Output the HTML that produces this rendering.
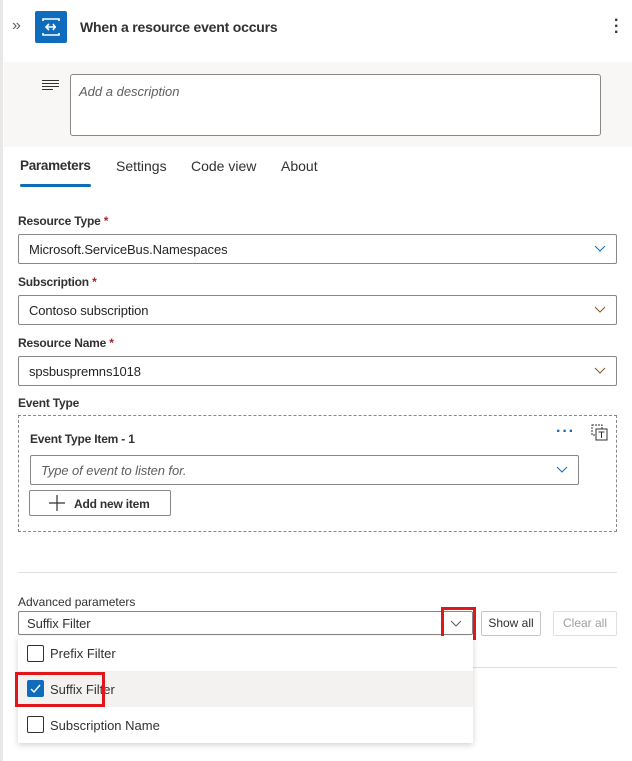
<!DOCTYPE html>
<html><head><meta charset="utf-8"><style>
*{box-sizing:border-box;margin:0;padding:0}
body{width:632px;height:761px;background:#fff;font-family:"Liberation Sans",sans-serif;color:#242424;position:relative;overflow:hidden;font-size:13px}
.a{position:absolute}
.lbl{font-size:12px;font-weight:bold;color:#323130;letter-spacing:-0.2px}
.lbl span{color:#a4262c}
.inp{border:1px solid #8a8886;border-radius:2px;background:#fff;font-size:13px;padding-left:10px;display:flex;align-items:center;letter-spacing:-0.1px}
.chev{position:absolute;right:10px;top:50%;margin-top:-4px}
.cb{width:17px;height:17px;border:1px solid #323130;border-radius:2px;position:absolute;left:9px}
</style></head><body>
<div class="a" style="left:0;top:0;width:3px;height:761px;background:#e8e8e8"></div>
<div class="a" style="left:12px;top:17px;color:#605e5c;font-size:16px">»</div>
<div class="a" style="left:35px;top:11px;width:32px;height:32px;background:#0f6cbd;border-radius:2px">
<svg width="32" height="32" viewBox="0 0 32 32"><g stroke="#fff" stroke-width="1.6" fill="none"><path d="M8 10V8h16v2M8 22v2h16v-2"/><path d="M11 16h10M14 13l-3 3 3 3M18 13l2 3-2 3"/></g></svg></div>
<div class="a" style="left:80px;top:19px;font-size:14px;font-weight:bold;color:#323130;letter-spacing:-0.2px">When a resource event occurs</div>
<div class="a" style="left:614px;top:18px;font-size:16px;font-weight:bold;line-height:6px;color:#323130">·<br>·<br>·</div>
<div class="a" style="left:4px;top:62px;width:628px;height:85px;background:#f8f7f6"></div>
<svg class="a" style="left:42px;top:80px" width="18" height="10"><g stroke="#323130" stroke-width="1"><path d="M0 .5h17M0 3.5h17M0 6.5h17M0 9.5h11"/></g></svg>
<div class="a" style="left:70px;top:74px;width:531px;height:62px;border:1px solid #8a8886;border-radius:3px;background:#fff;padding:9px 8px;font-style:italic;color:#605e5c;font-size:13px">Add a description</div>
<div class="a" style="left:20px;top:158px;font-size:13.5px;font-weight:bold;color:#323130;letter-spacing:-0.3px">Parameters</div>
<div class="a" style="left:20px;top:184px;width:71px;height:3px;background:#0f6cbd;border-radius:2px"></div>
<div class="a" style="left:116px;top:158px;font-size:14px;color:#323130">Settings</div>
<div class="a" style="left:191px;top:158px;font-size:14px;color:#323130">Code view</div>
<div class="a" style="left:281px;top:158px;font-size:14px;color:#323130">About</div>

<div class="a lbl" style="left:18px;top:214px">Resource Type <span>*</span></div>
<div class="a inp" style="left:18px;top:234px;width:599px;height:30px">Microsoft.ServiceBus.Namespaces<svg class="chev" width="12" height="8"><path d="M1 1l5 5 5-5" stroke="#0f6cbd" fill="none"/></svg></div>
<div class="a lbl" style="left:18px;top:275px">Subscription <span>*</span></div>
<div class="a inp" style="left:18px;top:295px;width:599px;height:30px">Contoso subscription<svg class="chev" width="12" height="8"><path d="M1 1l5 5 5-5" stroke="#8a5a2a" fill="none"/></svg></div>
<div class="a lbl" style="left:18px;top:336px">Resource Name <span>*</span></div>
<div class="a inp" style="left:18px;top:356px;width:599px;height:30px">spsbuspremns1018<svg class="chev" width="12" height="8"><path d="M1 1l5 5 5-5" stroke="#8a5a2a" fill="none"/></svg></div>
<div class="a lbl" style="left:18px;top:396px">Event Type</div>
<div class="a" style="left:18px;top:415px;width:599px;height:117px;border:1px dashed #8a8886"></div>
<div class="a lbl" style="left:30px;top:432px">Event Type Item - 1</div>
<div class="a" style="left:556px;top:423px;color:#0f6cbd;font-size:16px;font-weight:bold;letter-spacing:1px">···</div>
<svg class="a" style="left:591px;top:424px" width="18" height="18"><rect x="1" y="1" width="10" height="10" fill="none" stroke="#323130" stroke-dasharray="2 1"/><rect x="5" y="5" width="11" height="11" fill="#fff" stroke="#323130"/><path d="M7.5 8h6M10.5 8v6" stroke="#323130"/></svg>
<div class="a inp" style="left:30px;top:455px;width:549px;height:30px;font-style:italic;color:#605e5c">Type of event to listen for.<svg class="chev" width="12" height="8"><path d="M1 1l5 5 5-5" stroke="#0f6cbd" fill="none"/></svg></div>
<div class="a" style="left:29px;top:490px;width:142px;height:26px;border:1px solid #8a8886;border-radius:2px;font-size:12px;font-weight:bold;color:#323130;padding:6px 0 0 44px;letter-spacing:-0.2px">Add new item</div>
<svg class="a" style="left:49px;top:495px" width="16" height="16"><path d="M8 0v16M0 8h16" stroke="#323130" stroke-width="1.2"/></svg>

<div class="a" style="left:18px;top:572px;width:599px;height:1px;background:#e1dfdd"></div>
<div class="a" style="left:18px;top:595px;font-size:12px;color:#323130">Advanced parameters</div>
<div class="a inp" style="left:18px;top:611px;width:455px;height:24px;color:#323130;padding-left:8px">Suffix Filter<svg class="chev" style="right:10px;margin-top:-3px" width="12" height="8"><path d="M1 1l5 5 5-5" stroke="#605e5c" fill="none"/></svg></div>
<div class="a" style="left:441px;top:607px;width:35px;height:33px;border:3px solid #e0161b"></div>
<div class="a" style="left:481px;top:611px;width:60px;height:25px;border:1px solid #c8c6c4;border-radius:2px;font-size:12px;color:#323130;text-align:center;line-height:23px">Show all</div>
<div class="a" style="left:553px;top:611px;width:64px;height:25px;border:1px solid #e1dfdd;border-radius:2px;font-size:12px;color:#a19f9d;text-align:center;line-height:23px">Clear all</div>
<div class="a" style="left:473px;top:667px;width:144px;height:1px;background:#e1dfdd"></div>
<div class="a" style="left:18px;top:636px;width:455px;height:107px;background:#fff;box-shadow:0 2px 6px rgba(0,0,0,.18)">
 <div class="a" style="left:0;top:0;width:455px;height:35px"><div class="cb" style="top:9px"></div><div class="a" style="left:32px;top:10px;color:#323130">Prefix Filter</div></div>
 <div class="a" style="left:0;top:35px;width:455px;height:36px;background:#f3f2f1"><div class="cb" style="top:9px;background:#0f6cbd;border-color:#0f6cbd"><svg width="15" height="15"><path d="M3 8l3 3 6-7" stroke="#fff" stroke-width="1.4" fill="none"/></svg></div><div class="a" style="left:32px;top:11px;color:#323130">Suffix Filter</div></div>
 <div class="a" style="left:0;top:71px;width:455px;height:36px"><div class="cb" style="top:9px"></div><div class="a" style="left:32px;top:11px;color:#323130">Subscription Name</div></div>
</div>
<div class="a" style="left:15px;top:672px;width:90px;height:35px;border:3px solid #e0161b"></div>
</body></html>
